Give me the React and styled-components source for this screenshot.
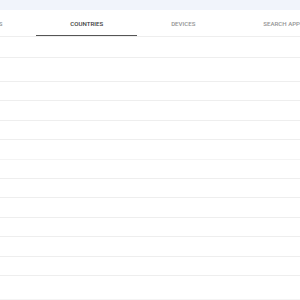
import React from 'react';
import styled, { createGlobalStyle } from 'styled-components';

const GlobalStyle = createGlobalStyle`
  html, body {
    margin: 0;
    padding: 0;
    background: #ffffff;
    font-family: Roboto, "Liberation Sans", Arial, sans-serif;
  }
`;

const Page = styled.div`
  width: 300px;
  height: 300px;
  overflow: hidden;
  display: flex;
  flex-direction: column;
`;

const TopBand = styled.div`
  height: 10px;
  flex: none;
  background: #f1f4fb;
`;

const TabBar = styled.div`
  height: 26px;
  flex: none;
  border-bottom: 1px solid #eeeeee;
  overflow: hidden;
`;

// scrolled tab strip: first tab is partly off to the left
const TabList = styled.div`
  display: flex;
  height: 100%;
  margin-left: -56px;
`;

const Tab = styled.div`
  position: relative;
  flex: none;
  padding: 0 34px;
  display: flex;
  align-items: center;
  justify-content: center;
  font-size: 6.1px;
  font-weight: 500;
  white-space: nowrap;
  color: ${({ active }) => (active ? '#3a3a3a' : '#939393')};

  &::after {
    content: '';
    display: ${({ active }) => (active ? 'block' : 'none')};
    position: absolute;
    left: 0;
    right: 0;
    bottom: -1px;
    height: 2px;
    background: #555555;
  }
`;

const Table = styled.div`
  display: flex;
  flex-direction: column;
`;

const Row = styled.div`
  flex: none;
  box-sizing: border-box;
  height: ${({ h }) => h}px;
  border-bottom: 1px solid ${({ faint }) => (faint ? '#f4f4f4' : '#eeeeee')};
`;

const tabs = ['QUERIES', 'COUNTRIES', 'DEVICES', 'SEARCH APPEARANCE'];
const rows = [21, 24, 19, 20, 19, 20, 19, 19, 20, 19, 20, 19, 24];

export default function App() {
  return (
    <>
      <GlobalStyle />
      <Page>
        <TopBand />
        <TabBar>
          <TabList>
            {tabs.map(t => (
              <Tab key={t} active={t === 'COUNTRIES'}>
                {t}
              </Tab>
            ))}
          </TabList>
        </TabBar>
        <Table>
          {rows.map((h, i) => (
            <Row key={i} h={h} faint={i === 5 || i === 12} />
          ))}
        </Table>
      </Page>
    </>
  );
}
